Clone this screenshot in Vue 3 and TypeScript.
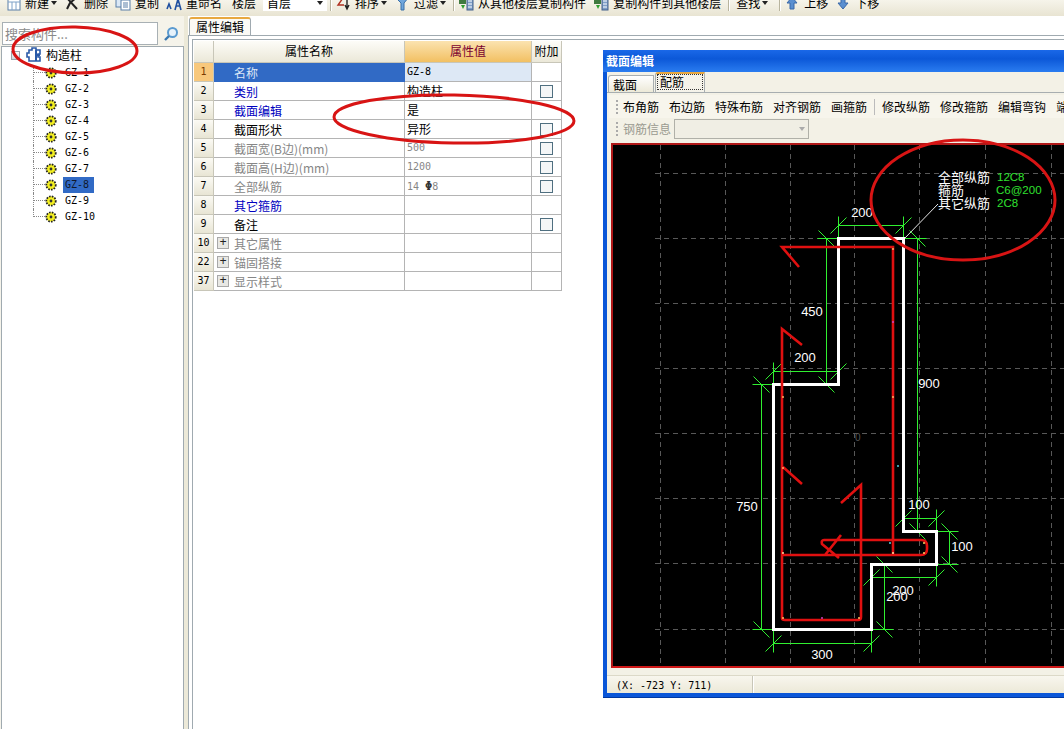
<script setup lang="ts">
interface TbItem { icon?: string; label?: string; caret?: boolean; kind?: string }
const toolbar: TbItem[] = [
  { icon: 'new', label: '新建', caret: true },
  { icon: 'del', label: '删除' },
  { icon: 'copy', label: '复制' },
  { icon: 'rename', label: '重命名' },
  { label: '楼层', kind: 'floor' },
  { kind: 'combo', label: '首层' },
  { kind: 'sep' },
  { icon: 'sort', label: '排序', caret: true },
  { icon: 'filter', label: '过滤', caret: true },
  { kind: 'sep' },
  { icon: 'stack', label: '从其他楼层复制构件' },
  { icon: 'stack', label: '复制构件到其他楼层' },
  { kind: 'sep' },
  { label: '查找', caret: true, kind: 'find' },
  { kind: 'sep' },
  { icon: 'up', label: '上移' },
  { icon: 'down', label: '下移' },
]
const nodes = ['GZ-1', 'GZ-2', 'GZ-3', 'GZ-4', 'GZ-5', 'GZ-6', 'GZ-7', 'GZ-8', 'GZ-9', 'GZ-10']

interface Row { n: number; name: string; tone: string; value?: string; valTone?: string; check?: boolean; plus?: boolean; latin?: boolean }
const rows: Row[] = [
  { n: 1, name: '名称', tone: 'sel', value: 'GZ-8', latin: true },
  { n: 2, name: '类别', tone: 'blue', value: '构造柱', check: true },
  { n: 3, name: '截面编辑', tone: 'blue', value: '是' },
  { n: 4, name: '截面形状', tone: 'black', value: '异形', check: true },
  { n: 5, name: '截面宽(B边)(mm)', tone: 'grey', value: '500', valTone: 'grey', check: true, latin: true },
  { n: 6, name: '截面高(H边)(mm)', tone: 'grey', value: '1200', valTone: 'grey', check: true, latin: true },
  { n: 7, name: '全部纵筋', tone: 'grey', value: '14', valTone: 'grey', check: true, latin: true },
  { n: 8, name: '其它箍筋', tone: 'blue' },
  { n: 9, name: '备注', tone: 'black', check: true },
  { n: 10, name: '其它属性', tone: 'grey', plus: true },
  { n: 22, name: '锚固搭接', tone: 'grey', plus: true },
  { n: 37, name: '显示样式', tone: 'grey', plus: true },
]
const winTools = ['布角筋', '布边筋', '特殊布筋', '对齐钢筋', '画箍筋', '|', '修改纵筋', '修改箍筋', '编辑弯钩', '端部']

const gridX = [660, 725, 790, 854, 919, 985, 1051]
const gridY = [173, 238, 303, 368, 433, 498, 563, 629]

function dimH(y: number, x1: number, x2: number, s: number): string {
  const e = y < s ? y - 9 : y + 9
  return `M${x1} ${y}H${x2}M${x1} ${s}V${e}M${x2} ${s}V${e}M${x1 - 8} ${y + 8}L${x1 + 8} ${y - 8}M${x2 - 8} ${y + 8}L${x2 + 8} ${y - 8}`
}
function dimV(x: number, y1: number, y2: number, s: number): string {
  const e = x < s ? x - 9 : x + 9
  return `M${x} ${y1}V${y2}M${s} ${y1}H${e}M${s} ${y2}H${e}M${x - 8} ${y1 - 8}L${x + 8} ${y1 + 8}M${x - 8} ${y2 - 8}L${x + 8} ${y2 + 8}`
}
const dimPath = [
  dimH(225, 838, 903, 238),
  dimH(371, 773, 838, 384),
  dimH(518, 903, 936, 531),
  dimH(577, 871, 936, 564),
  dimH(643, 773, 871, 629),
  dimV(826, 238, 384, 838),
  dimV(917, 238, 531, 903),
  dimV(761, 384, 629, 773),
  dimV(949, 531, 564, 936),
  dimV(884, 564, 629, 871),
].join('')

const dimLabels = [
  { t: '200', x: 862, y: 217 }, { t: '450', x: 812, y: 316 }, { t: '200', x: 805, y: 362 },
  { t: '900', x: 929, y: 388 }, { t: '750', x: 747, y: 511 }, { t: '100', x: 919, y: 509 },
  { t: '100', x: 962, y: 551 }, { t: '200', x: 903, y: 595 }, { t: '200', x: 897, y: 601 },
  { t: '300', x: 822, y: 659 },
]
const dots = [
  { x: 893, y: 249, c: '#ffb060' }, { x: 893, y: 322, c: '#d040c0' }, { x: 893, y: 397, c: '#ffb060' },
  { x: 783, y: 397, c: '#ffb060' }, { x: 898, y: 466, c: '#50d0e0' }, { x: 890, y: 543, c: '#50d0e0' },
  { x: 924, y: 543, c: '#ffd060' }, { x: 924, y: 553, c: '#ffd060' }, { x: 893, y: 553, c: '#ffe0a0' },
  { x: 783, y: 553, c: '#ffe0a0' }, { x: 783, y: 618, c: '#ffc060' }, { x: 822, y: 618, c: '#d040c0' },
  { x: 859, y: 618, c: '#ffc060' }, { x: 783, y: 468, c: '#ffb060' },
]
</script>

<template>
  <div class="page">
    <div class="toolbar">
      <div class="tb-row">
        <template v-for="(it, i) in toolbar" :key="i">
          <span v-if="it.kind === 'sep'" class="tb-sep"></span>
          <span v-else-if="it.kind === 'combo'" class="tb-combo">{{ it.label }}<i class="caret"></i></span>
          <span v-else class="tb-item" :class="it.kind">
            <svg v-if="it.icon" class="tb-icon" width="16" height="16" viewBox="0 0 16 16">
              <g v-if="it.icon === 'new'">
                <rect x="3" y="4" width="12" height="11" fill="#fff" stroke="#5a7fa8" />
                <path d="M3 7H15M7 7V15M11 7V15" stroke="#7fa2c8" />
                <path d="M1 1L5 4" stroke="#e0b020" stroke-width="3" />
              </g>
              <path v-else-if="it.icon === 'del'" d="M3 3L13 14M13 2L6 8L3 14" stroke="#222" stroke-width="2" fill="none" />
              <g v-else-if="it.icon === 'copy'">
                <rect x="1" y="3" width="8" height="9" fill="#dbe8f6" stroke="#5a7fa8" />
                <rect x="6" y="5" width="9" height="10" fill="#fff" stroke="#5a7fa8" />
                <path d="M8 8H13M8 10H13M8 12H13" stroke="#5a7fa8" />
              </g>
              <g v-else-if="it.icon === 'rename'">
                <path d="M1 14L3 9L5 14M9 15L12 4L15 15M10 11H14" stroke="#1f4fa0" stroke-width="1.6" fill="none" />
                <path d="M3 4L6 1" stroke="#a08020" stroke-width="2" />
              </g>
              <g v-else-if="it.icon === 'sort'">
                <path d="M2 3H8L3 10H9" stroke="#b03020" stroke-width="1.4" fill="none" />
                <path d="M12 2V13M10 10L12 14L14 10" stroke="#222" stroke-width="1.4" fill="none" />
              </g>
              <path v-else-if="it.icon === 'filter'" d="M1 2H15L10 8V15H7V8Z" fill="#6fa6dc" stroke="#3a70a8" />
              <g v-else-if="it.icon === 'stack'">
                <rect x="1" y="1" width="7" height="8" fill="#3f7a3f" />
                <rect x="9" y="3" width="6" height="12" fill="#7f9fc8" stroke="#44608a" />
                <path d="M10 6H14M10 9H14M10 12H14" stroke="#fff" />
                <path d="M3 10H7L5 14Z" fill="#30a030" />
              </g>
              <path v-else-if="it.icon === 'up'" d="M8 2L13 8H10V14H6V8H3Z" fill="#5a8fd0" stroke="#3a68a8" />
              <path v-else-if="it.icon === 'down'" d="M8 14L13 8H10V2H6V8H3Z" fill="#5a8fd0" stroke="#3a68a8" />
            </svg>
            <span>{{ it.label }}</span>
            <i v-if="it.caret" class="caret"></i>
          </span>
        </template>
      </div>
    </div>

    <div class="body">
      <aside class="side">
        <div class="search">
          <div class="search-input">搜索构件...</div>
          <div class="search-btn">
            <svg width="16" height="16" viewBox="0 0 16 16">
              <circle cx="9.5" cy="6.5" r="4.5" fill="#e6f2fb" stroke="#5a9ad0" stroke-width="2" />
              <path d="M6 10L2 14" stroke="#3a78b0" stroke-width="2.4" />
            </svg>
          </div>
        </div>
        <div class="tree">
          <div class="tree-root">
            <span class="expander"></span>
            <svg width="16" height="16" viewBox="0 0 16 16">
              <path d="M3 3H6V1H10V3H14V7H12V10H14V14H3V10H1V6H3Z" fill="#fff" stroke="#2a5aa8" stroke-width="1.6" />
              <path d="M10 3V14M10 8H14" stroke="#2a5aa8" stroke-width="2" />
            </svg>
            <span class="root-label">构造柱</span>
          </div>
          <div class="tree-list">
            <div v-for="(n, i) in nodes" :key="n" class="tree-row">
              <span class="conn" :class="{ last: i === nodes.length - 1 }"></span>
              <svg width="12" height="12" viewBox="0 0 12 12" class="gear">
                <circle cx="6" cy="6" r="4.7" fill="#f4f020" stroke="#222" stroke-width="1.8" stroke-dasharray="1.6 1.2" />
                <circle cx="6" cy="6" r="1.4" fill="#333" />
              </svg>
              <span class="node-label" :class="{ active: n === 'GZ-8' }">{{ n }}</span>
            </div>
          </div>
        </div>
      </aside>
      <div class="splitter"></div>

      <main class="main">
        <div class="tabs">
          <div class="tab">属性编辑</div>
        </div>
        <div class="pane">
          <div class="frame">
            <div class="sheet">
              <div class="head corner"></div>
              <div class="head">属性名称</div>
              <div class="head hot">属性值</div>
              <div class="head">附加</div>
              <template v-for="r in rows" :key="r.n">
                <div class="num" :class="{ on: r.n === 1 }">{{ r.n }}</div>
                <div class="name" :class="r.tone">
                  <span v-if="r.plus" class="plus">+</span>
                  <span>{{ r.name }}</span>
                </div>
                <div class="val" :class="[r.valTone, { latin: r.latin, cur: r.n === 1 }]">
                  {{ r.value }}<b v-if="r.n === 7" class="grade">Φ</b><template v-if="r.n === 7">8</template>
                </div>
                <div class="extra"><span v-if="r.check" class="check"></span></div>
              </template>
            </div>
          </div>
        </div>
      </main>
    </div>

    <section class="window">
      <header class="win-title">截面编辑</header>
      <div class="win-inner">
        <div class="win-tabs">
          <span class="wtab">截面</span>
          <span class="wtab on"><span class="focus">配筋</span></span>
        </div>
        <div class="win-bar">
          <span class="grip"></span>
          <template v-for="t in winTools" :key="t">
            <span v-if="t === '|'" class="win-sep"></span>
            <span v-else class="win-tool">{{ t }}</span>
          </template>
        </div>
        <div class="win-bar2">
          <span class="grip"></span>
          <span class="win-label">钢筋信息</span>
          <span class="win-combo"><i class="caret pale"></i></span>
        </div>
        <div class="canvas">
          <svg class="draw" width="460" height="521" viewBox="613 145 460 521">
            <path v-for="x in gridX" :key="'v' + x" :d="`M${x + 0.5} 145V666`" class="grid-line" />
            <path v-for="y in gridY" :key="'h' + y" :d="`M655 ${y + 0.5}H1073`" class="grid-line" />
            <text x="855" y="441" class="origin">0</text>
            <path :d="dimPath" class="dim" transform="translate(0.5 0.5)" />
            <path d="M905 238L938 204" class="leader" />
            <path d="M838 238H903V531H936V564H871V629H773V384H838Z" class="outline" />
            <path class="rebar" d="M799 267L782 247H893V555M802 345L782 329V618Q782 620 785 620H858Q861 620 861 617V485L841 503M783 467L802 484M783 555H921Q927 555 927 549V546Q927 540 921 540H824Q821 540 822 544L839 558M825 555L841 535" />
            <circle v-for="(d, i) in dots" :key="i" :cx="d.x" :cy="d.y" r="1" :fill="d.c" />
            <text v-for="(l, i) in dimLabels" :key="i" :x="l.x" :y="l.y" class="dim-text">{{ l.t }}</text>
            <text x="938" y="182" class="info">全部纵筋</text>
            <text x="938" y="195" class="info">箍筋</text>
            <text x="938" y="208" class="info">其它纵筋</text>
            <text x="997" y="181" class="info-val">12C8</text>
            <text x="996" y="194" class="info-val">C6@200</text>
            <text x="997" y="207" class="info-val">2C8</text>
          </svg>
        </div>
        <footer class="status">
          <span class="status-cell">(X: -723 Y: 711)</span>
          <span class="status-rest"></span>
        </footer>
      </div>
    </section>

    <svg class="marks" width="1064" height="729" viewBox="0 0 1064 729">
      <ellipse cx="75" cy="50" rx="62" ry="23" transform="rotate(1 75 50)" />
      <ellipse cx="454" cy="119" rx="120" ry="24" transform="rotate(1 454 119)" />
      <ellipse cx="963" cy="200" rx="92" ry="60" />
    </svg>
  </div>
</template>

<style>
html, body { margin: 0; background: #fff; }
</style>

<style scoped>
.page {
  position: relative;
  width: 1064px;
  height: 729px;
  overflow: hidden;
  display: flex;
  flex-direction: column;
  background: #fff;
  color: #000;
  font: 12px/16px "Noto Sans CJK SC", "Liberation Sans", sans-serif;
}
.caret {
  display: inline-block;
  width: 0;
  height: 0;
  border: 3px solid transparent;
  border-top: 4px solid #222;
  border-bottom: 0;
}
.caret.pale { border-top-color: #aaa; }

.toolbar {
  height: 16px;
  flex: none;
  overflow: hidden;
  background: linear-gradient(#f6f4ea, #e8e4d2);
}
.tb-row {
  display: flex;
  align-items: center;
  height: 16px;
  margin-top: -5px;
  padding-left: 5px;
  white-space: nowrap;
}
.tb-item { display: flex; align-items: center; margin-right: 7px; }
.tb-icon { margin-right: 4px; flex: none; }
.tb-item .caret { margin-left: 2px; }
.tb-item.floor { margin-left: 3px; }
.tb-item.find { margin-left: 3px; margin-right: 11px; }
.tb-combo {
  width: 64px;
  height: 16px;
  box-sizing: border-box;
  padding: 0 4px;
  margin-right: 3px;
  background: #fff;
  display: flex;
  align-items: center;
  justify-content: space-between;
}
.tb-sep {
  width: 1px;
  height: 16px;
  flex: none;
  background: #b8b49e;
  border-right: 1px solid #fff;
  margin-right: 3px;
}

.body { flex: 1; min-height: 0; display: flex; }
.side {
  width: 184px;
  flex: none;
  background: #f5f3ea;
  padding-top: 6px;
  display: flex;
  flex-direction: column;
  box-sizing: border-box;
}
.search { display: flex; margin-left: 2px; height: 23px; }
.search-input {
  width: 156px;
  box-sizing: border-box;
  border: 1px solid #a8b0b4;
  background: #fff;
  color: #8a8a8a;
  font-size: 13px;
  line-height: 21px;
  padding-left: 2px;
}
.search-btn { flex: 1; display: flex; align-items: center; justify-content: center; }
.tree {
  flex: 1;
  margin: 1px 0 0 1px;
  border: 1px solid #a0aab0;
  border-bottom: 0;
  background: #fff;
}
.tree-root { height: 16px; padding: 0 0 2px 9px; display: flex; align-items: center; }
.expander {
  width: 7px;
  height: 7px;
  border: 1px solid #9aa6ac;
  background: linear-gradient(#fff, #cfd6da);
  margin-right: 6px;
}
.root-label { margin-left: 4px; }
.tree-list { padding-left: 31px; }
.tree-row { display: flex; align-items: center; height: 16px; }
.conn {
  position: relative;
  width: 12px;
  height: 16px;
  flex: none;
  border-left: 1px dotted #888;
  box-sizing: border-box;
  align-self: flex-start;
}
.conn.last { height: 8px; }
.conn::after {
  content: "";
  position: absolute;
  left: 0;
  top: 7px;
  width: 11px;
  border-top: 1px dotted #888;
}
.gear { flex: none; margin-right: 6px; }
.node-label {
  font: 10px/16px "DejaVu Sans Mono", monospace;
  padding: 0 5px 0 2px;
  height: 16px;
}
.node-label.active { background: #316ac5; color: #10182a; }

.splitter { width: 4px; flex: none; background: #ece9d8; }
.main { flex: 1; min-width: 0; display: flex; flex-direction: column; }
.tabs { height: 19px; flex: none; display: flex; align-items: flex-end; padding-left: 1px; }
.tab {
  width: 62px;
  height: 18px;
  box-sizing: border-box;
  border: 1px solid #a0aab0;
  border-top: 2px solid #e8a840;
  border-bottom: 0;
  border-radius: 3px 3px 0 0;
  text-align: center;
  line-height: 16px;
  background: #fbfaf5;
}
.pane {
  flex: 1;
  border-top: 1px solid #a0aab0;
  border-left: 1px solid #a0aab0;
  padding: 3px 0 0 3px;
  display: flex;
}
.frame {
  flex: 1;
  border-top: 1px solid #a0aab0;
  border-left: 1px solid #a0aab0;
  padding: 1px 0 0 1px;
}
.sheet {
  display: grid;
  grid-template-columns: 20px 191px 127px 30px;
  grid-auto-rows: 19px;
  grid-template-rows: 22px;
  width: 368px;
}
.head {
  background: linear-gradient(#fdfcf8, #ebe8d8);
  text-align: center;
  line-height: 20px;
  border-right: 1px solid #c8c6b8;
  border-bottom: 1px solid #c8c6b8;
}
.head.hot { background: linear-gradient(#fbe3b0, #f2c062); color: #7a0030; }
.num {
  background: linear-gradient(#fbfaf4, #e8e5d4);
  text-align: center;
  font: 10px/18px "DejaVu Sans Mono", monospace;
  border-bottom: 1px solid #c8c6b8;
  border-right: 1px solid #c8c6b8;
}
.num.on { background: #f8c87c; color: #7a3a00; }
.name, .val, .extra {
  border-right: 1px solid #b4b4b4;
  border-bottom: 1px solid #b4b4b4;
  line-height: 18px;
  white-space: nowrap;
  display: flex;
  align-items: center;
}
.name { padding: 1px 0 0 20px; position: relative; box-sizing: border-box; }
.name.sel { background: #316ac5; color: #dce6f6; border-color: #316ac5; }
.name.blue { color: #0000c0; }
.name.black { color: #000; }
.name.grey { color: #868686; }
.plus {
  position: absolute;
  left: 3px;
  top: 3px;
  width: 10px;
  height: 10px;
  border: 1px solid #a8a8a8;
  background: #e8e8e4;
  color: #222;
  font: 12px/10px "Liberation Mono", monospace;
  text-align: center;
}
.val { padding-left: 2px; display: block; }
.val.latin { font: 10px/18px "DejaVu Sans Mono", monospace; }
.val.grey { color: #868686; }
.val.cur { background: #dde8f5; }
.grade { color: #333; font-size: 12px; margin-left: 6px; }
.extra { justify-content: center; }
.check {
  width: 11px;
  height: 11px;
  border: 1px solid #4f6f80;
  background: #f4f6f7;
}

.window {
  position: absolute;
  left: 603px;
  top: 50px;
  width: 480px;
  height: 648px;
  box-sizing: border-box;
  background: #0a56d8;
  padding: 0 0 4px 4px;
  display: flex;
  flex-direction: column;
  border-radius: 3px 3px 0 0;
  border-bottom: 1px solid #0038a0;
}
.win-title {
  height: 22px;
  flex: none;
  margin-left: -4px;
  padding-left: 3px;
  background: linear-gradient(#1a68e8, #0c58d8 40%, #2a7cf0);
  color: #fff;
  font-weight: 700;
  line-height: 21px;
}
.win-inner {
  flex: 1;
  min-height: 0;
  background: #f3f1e6;
  display: flex;
  flex-direction: column;
}
.win-tabs {
  height: 20px;
  flex: none;
  display: flex;
  align-items: flex-end;
  border-bottom: 1px solid #a8aeb0;
  padding-left: 1px;
}
.wtab {
  width: 46px;
  height: 17px;
  box-sizing: border-box;
  border: 1px solid #a8aeb0;
  border-bottom: 0;
  border-radius: 3px 0 0 0;
  padding-left: 4px;
  background: linear-gradient(#fff, #ece9d8);
  line-height: 17px;
}
.wtab.on {
  width: 50px;
  height: 20px;
  margin-left: 1px;
  border-top: 2px solid #e8a840;
  background: #f5f3ea;
  padding: 1px 0 0 0;
  line-height: 14px;
}
.focus { display: block; margin: 0 2px; padding-left: 2px; outline: 1px dotted #333; height: 14px; }
.win-bar {
  height: 23px;
  flex: none;
  margin: 2px 0 0 2px;
  display: flex;
  align-items: center;
  white-space: nowrap;
  background: #f7f5ec;
  box-sizing: border-box;
  padding-left: 7px;
}
.grip {
  width: 2px;
  height: 14px;
  flex: none;
  margin-right: 5px;
  background: repeating-linear-gradient(#aaa 0 2px, transparent 2px 4px);
}
.win-tool { margin-right: 10px; }
.win-sep { width: 1px; height: 16px; background: #bbb; margin: 0 7px 0 -3px; flex: none; }
.win-bar2 {
  height: 21px;
  flex: none;
  display: flex;
  align-items: center;
  padding-left: 9px;
}
.win-label { color: #9a9a90; margin-right: 3px; }
.win-combo {
  width: 130px;
  height: 18px;
  border: 1px solid #b0b0a8;
  background: #f0eee4;
  display: flex;
  align-items: center;
  justify-content: flex-end;
  padding-right: 3px;
}
.canvas {
  height: 521px;
  flex: none;
  margin: 4px 0 0 4px;
  border-top: 2px solid #b01818;
  border-left: 2px solid #b01818;
  border-bottom: 2px solid #d01818;
  background: #000;
  overflow: hidden;
}
.draw { display: block; }
.grid-line { stroke: #585858; stroke-width: 1; stroke-dasharray: 5 4; fill: none; }
.origin { fill: #555; font: 10px "Liberation Sans", sans-serif; }
.dim { stroke: #30f030; stroke-width: 1; fill: none; }
.leader { stroke: #e8e8e8; stroke-width: 1; fill: none; }
.outline { stroke: #fff; stroke-width: 3; fill: none; shape-rendering: crispEdges; }
.rebar { stroke: #e01010; stroke-width: 2.6; fill: none; }
.dim-text { fill: #fff; font: 13px "Liberation Sans", sans-serif; text-anchor: middle; }
.info { fill: #fff; font: 13px "Noto Sans CJK SC", sans-serif; }
.info-val { fill: #30e030; font: 11.5px "Liberation Sans", sans-serif; }
.status {
  flex: 1;
  min-height: 0;
  margin-top: 7px;
  display: flex;
  border-top: 1px solid #dcd9c8;
  background: linear-gradient(#f8f6ee, #ece9d8);
}
.status-cell {
  width: 146px;
  flex: none;
  padding-left: 9px;
  box-sizing: border-box;
  border-right: 1px solid #c8c6b8;
  font: 10px/20px "DejaVu Sans Mono", monospace;
}
.status-rest { flex: 1; border-left: 1px solid #fff; }

.marks { position: absolute; left: 0; top: 0; pointer-events: none; }
.marks ellipse { fill: none; stroke: #d81414; stroke-width: 3; }
</style>
